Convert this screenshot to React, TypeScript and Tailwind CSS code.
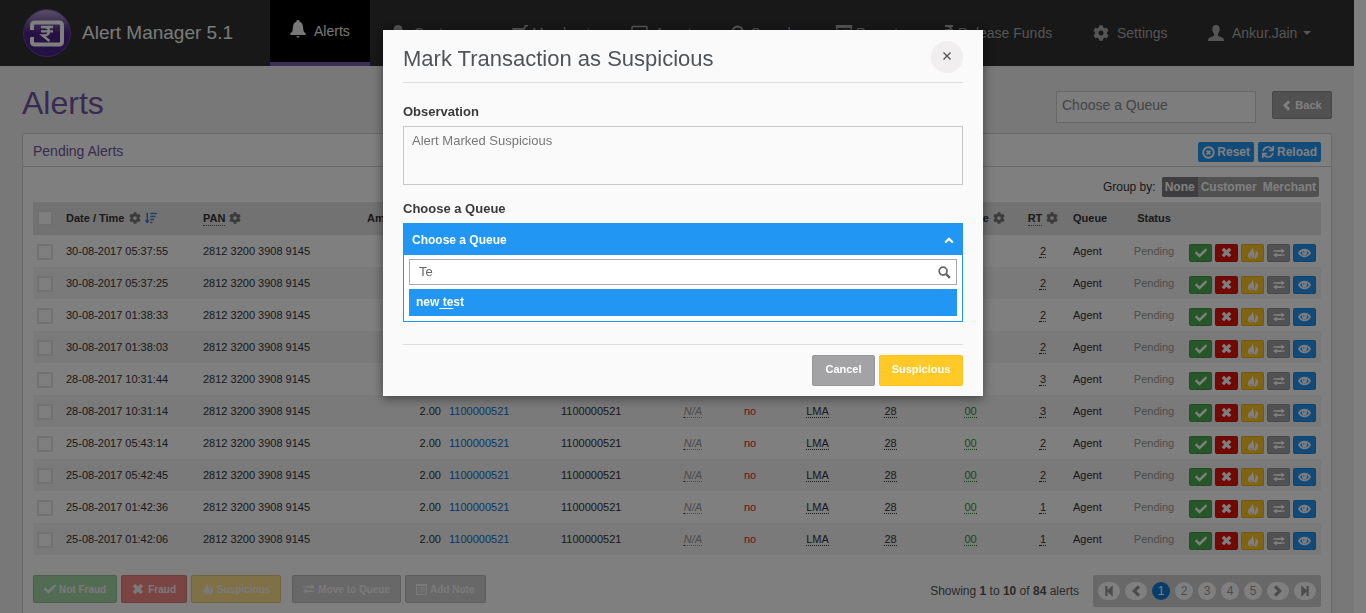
import { useState } from "react";
import type { ReactNode } from "react";
import { FaCheck, FaCog, FaSync, FaSortAmountDown } from "react-icons/fa";

type IconProps = { className?: string };

const Cross = ({ className }: IconProps) => (
  <svg viewBox="0 0 12 12" className={className} aria-hidden="true">
    <path d="M2 2 10 10M10 2 2 10" stroke="currentColor" strokeWidth="3.6" fill="none" />
  </svg>
);

const Bell = ({ className }: IconProps) => (
  <svg viewBox="0 0 16 18" className={className} fill="currentColor" aria-hidden="true">
    <path d="M8 0c1 0 1.600.7 1.700 1.700C11.800 2.500 12.800 4.200 13 6.500l.4 3.500c.2 1.700 1 2.600 2.300 3.600V15H.3v-1.400C1.600 12.600 2.400 11.700 2.600 10L3 6.500c.2-2.300 1.200-4 3.300-4.800C6.400.7 7 0 8 0z" />
    <path d="M6.300 16.200h3.400q-.4 1.600-1.700 1.600t-1.700-1.600z" />
  </svg>
);

const Cart = ({ className }: IconProps) => (
  <svg viewBox="0 0 16 16" className={className} fill="currentColor" aria-hidden="true">
    <path d="M0 3h11.500L12.500.5Q12.700 0 13.200 0H16v1.600h-2L11.200 10H2.200z" />
    <path d="M2.500 11.300h9v1.400h-9z" />
    <circle cx="4" cy="14.500" r="1.400" />
    <circle cx="10" cy="14.500" r="1.400" />
  </svg>
);

const Flame = ({ className }: IconProps) => (
  <svg viewBox="1 0 13 14" className={className} fill="currentColor" aria-hidden="true">
    <path d="M5.800 0C7 2 6 3.600 4.400 5.200 2.600 7 1.200 8.200 1.700 10.400c.4 1.800 1.700 3 3.500 3.500C4 12 4.200 10.800 5.400 9.400c.3 1.300.7 2.200.2 4.400C8 13 9.200 11 9 8.300 8.800 5 8 2 5.800 0z" />
    <path d="M10.300 3.500c.6 1.900.3 3.600-.2 5.200-.5 1.700-1.200 3-2 4.900 3-.3 5.200-1.900 5.500-4.400C13.800 6.800 12.400 5.200 10.300 3.500z" />
  </svg>
);

const Transfer = ({ className }: IconProps) => (
  <svg viewBox="0 0 14 12" className={className} fill="currentColor" aria-hidden="true">
    <path d="M.5 2.500H2v2H.5zM2.700 2.500H10V.3l4 3.200-4 3.200V4.500H2.700zM13.500 7.500H12v2h1.500zM11.300 7.500H4V5.300L0 8.500l4 3.200V9.500h7.300z" />
  </svg>
);

const Eye = ({ className }: IconProps) => (
  <svg viewBox="0 0 14 10" className={className} aria-hidden="true">
    <path d="M1 5C4 .2 10 .2 13 5 10 9.800 4 9.800 1 5z" fill="none" stroke="currentColor" strokeWidth="1.700" />
    <circle cx="7" cy="4.600" r="2.700" fill="currentColor" />
    <circle cx="6.300" cy="3.800" r=".8" fill="#2196f3" />
  </svg>
);

const ListBox = ({ className }: IconProps) => (
  <svg viewBox="0 0 16 16" className={className} aria-hidden="true">
    <path d="M0 0h16v16H0z M1.500 3v11.500h13V3z" fill="currentColor" fillRule="evenodd" />
    <path d="M3 5.500h1.500M6 5.500h7M3 8.500h1.500M6 8.500h7M3 11.500h1.500M6 11.500h7" stroke="currentColor" strokeWidth="1.400" />
  </svg>
);

const CircleCross = ({ className }: IconProps) => (
  <svg viewBox="0 0 14 14" className={className} fill="none" stroke="currentColor" aria-hidden="true">
    <circle cx="7" cy="7" r="5.700" strokeWidth="2" />
    <path d="M5 5l4 4M9 5L5 9" strokeWidth="2.200" />
  </svg>
);

const Chevron = ({ className }: IconProps) => (
  <svg viewBox="0 0 12 14" className={className} aria-hidden="true">
    <path d="M9.500 1.500 4 7l5.500 5.500" fill="none" stroke="currentColor" strokeWidth="3.800" />
  </svg>
);

const Skip = ({ className }: IconProps) => (
  <svg viewBox="0 0 12 14" className={className} fill="currentColor" aria-hidden="true">
    <path d="M1.500 1h2.700v5L10.500 0v14L4.200 8v5H1.500z" />
  </svg>
);

const Person = ({ className }: IconProps) => (
  <svg viewBox="0 0 16 16" className={className} fill="currentColor" aria-hidden="true">
    <path d="M8 0c2.300 0 3.700 1.600 3.700 4 0 2-.7 3.700-1.700 4.800v1.600c.6.700 2 1.200 3.500 1.800 1.800.7 2.500 1.400 2.500 3.800H0c0-2.400.7-3.100 2.500-3.800C4 11.600 5.400 11.100 6 10.400V8.800C5 7.700 4.300 6 4.300 4 4.300 1.600 5.700 0 8 0z" />
  </svg>
);

const Pin = ({ className }: IconProps) => (
  <svg viewBox="0 0 16 16" className={className} fill="currentColor" aria-hidden="true">
    <circle cx="8" cy="4.500" r="4.500" />
    <path d="M3 16V11q0-2 2-2h6q2 0 2 2v5z" />
  </svg>
);

const Monitor = ({ className }: IconProps) => (
  <svg viewBox="0 0 17 16" className={className} aria-hidden="true">
    <rect x="1" y="1" width="15" height="10" rx="1" fill="none" stroke="currentColor" strokeWidth="1.600" />
    <path d="M5 14.500h7" stroke="currentColor" strokeWidth="2" />
  </svg>
);

const Magnifier = ({ className }: IconProps) => (
  <svg viewBox="0 0 14 14" className={className} fill="none" stroke="currentColor" aria-hidden="true">
    <circle cx="5.500" cy="5.500" r="4.200" strokeWidth="1.900" />
    <path d="M8.500 8.500l4.300 4.300" strokeWidth="2.600" />
  </svg>
);

const Rupee = ({ className }: IconProps) => (
  <svg viewBox="0 0 10 16" className={className} fill="none" stroke="currentColor" strokeWidth="2" aria-hidden="true">
    <path d="M1 1h8M1 5h8M1 1h2q4 0 4 4t-4 4H1l6 6" />
  </svg>
);

const Logo = ({ className }: IconProps) => (
  <svg viewBox="0 0 48 48" className={className} aria-hidden="true">
    <defs>
      <linearGradient id="gloss" x1="0" y1="0" x2="0" y2="1">
        <stop offset="0" stopColor="#b3a0d2" />
        <stop offset=".4" stopColor="#5d3d96" />
        <stop offset=".5" stopColor="#4b2388" />
        <stop offset="1" stopColor="#4a2489" />
      </linearGradient>
    </defs>
    <circle cx="24" cy="24" r="23.500" fill="url(#gloss)" stroke="#6a48a4" />
    <path d="M9 21v-4.500q0-3 3-3h24q3 0 3 3v16q0 3-3 3H12q-3 0-3-3V28" fill="none" stroke="#fff" strokeWidth="4" />
    <path d="M7 21.500l5 2-3 1.500 3 1.500-5 2z" fill="#4b2388" />
    <path d="M18 18h12M18 22.300h12M18 18h3.500q4.500 0 4.500 4.200t-5 4.300h-1.500l7 5.500" fill="none" stroke="#fff" strokeWidth="2.300" />
  </svg>
);

const navItems: { label: string; width: string; icon: ReactNode; box: string; active?: boolean; caret?: boolean }[] = [
  { label: "Alerts", width: "w-[100px]", box: "w-6", icon: <Bell className="mb-1 h-[18px] w-4" />, active: true },
  { label: "Customers", width: "w-[122px]", box: "w-6", icon: <Pin className="size-4" /> },
  { label: "Merchants", width: "w-[119px]", box: "w-5", icon: <Cart className="size-4" /> },
  { label: "Agents", width: "w-[100px]", box: "w-6", icon: <Monitor className="size-[17px]" /> },
  { label: "Search", width: "w-[105px]", box: "w-5", icon: <Magnifier className="size-[17px]" /> },
  { label: "Reports", width: "w-[108px]", box: "w-5", icon: <ListBox className="size-4" /> },
  { label: "Release Funds", width: "w-[149px]", box: "w-[14px]", icon: <Rupee className="h-4 w-[10px]" /> },
  { label: "Settings", width: "w-[115px]", box: "w-6", icon: <FaCog className="size-4" /> },
  { label: "Ankur.Jain", width: "w-[146px]", box: "w-6", icon: <Person className="size-4" />, caret: true },
];

const rows = [
  ["30-08-2017 05:37:55", "2"],
  ["30-08-2017 05:37:25", "2"],
  ["30-08-2017 01:38:33", "2"],
  ["30-08-2017 01:38:03", "2"],
  ["28-08-2017 10:31:44", "3"],
  ["28-08-2017 10:31:14", "3"],
  ["25-08-2017 05:43:14", "2"],
  ["25-08-2017 05:42:45", "2"],
  ["25-08-2017 01:42:36", "1"],
  ["25-08-2017 01:42:06", "1"],
];

const Abbr = ({ children, className = "" }: { children: ReactNode; className?: string }) => (
  <abbr className={`inline-block border-b border-dotted border-[#333] leading-3 underline decoration-dotted underline-offset-2 ${className}`}>
    {children}
  </abbr>
);

const HeadAbbr = ({ children }: { children: ReactNode }) => (
  <abbr className="inline-block border-b border-dotted border-[#555] leading-[13px] no-underline">{children}</abbr>
);

const Gear = () => <FaCog className="ml-1 inline size-3 align-[-2px] text-[#777]" />;

const RowAction = ({ label, color, children }: { label: string; color: string; children: ReactNode }) => (
  <button type="button" aria-label={label} className={`flex h-[18px] w-[23px] items-center justify-center rounded-xs border border-black/10 text-white ${color}`}>
    {children}
  </button>
);

const BulkAction = ({ color, children }: { color: string; children: ReactNode }) => (
  <button type="button" disabled className={`flex h-7 items-center gap-[3px] rounded-xs border border-black/10 px-[10px] text-[10px] font-bold ${color}`}>
    {children}
  </button>
);

function AlertsTable() {
  return (
    <table className="w-full table-fixed border-collapse text-[11px] leading-4 text-[#333]">
      <colgroup>
        <col className="w-[29px]" />
        <col className="w-[137px]" />
        <col className="w-[151px]" />
        <col className="w-[95px]" />
        <col className="w-[112px]" />
        <col className="w-[107px]" />
        <col className="w-[58px]" />
        <col className="w-[56px]" />
        <col className="w-[79px]" />
        <col className="w-[67px]" />
        <col className="w-[93px]" />
        <col className="w-[52px]" />
        <col className="w-[54px]" />
        <col className="w-[62px]" />
        <col className="w-[136px]" />
      </colgroup>
      <thead>
        <tr className="h-[33px] bg-[#e4e4e4] text-left whitespace-nowrap [&>th]:pb-[2px]">
          <th className="px-1">
            <input type="checkbox" aria-label="Select all alerts" className="block size-4 appearance-none border-2 border-[#e0e0e0] bg-white" />
          </th>
          <th className="px-1">
            Date / Time
            <Gear />
            <FaSortAmountDown className="ml-1 inline size-3 align-[-2px] text-[#3f7fc4]" />
          </th>
          <th className="px-1"><HeadAbbr>PAN</HeadAbbr><Gear /></th>
          <th className="px-1 text-right">Amount (₹)<Gear /></th>
          <th className="px-1">Merchant ID</th>
          <th className="px-1">Terminal ID</th>
          <th className="px-1 text-center">MCC</th>
          <th className="px-1 text-center">Intl.</th>
          <th className="px-1 text-center">Source</th>
          <th className="px-1 text-center">Type</th>
          <th className="px-1 text-center">Response<Gear /></th>
          <th className="px-1 text-center"><HeadAbbr>RT</HeadAbbr><Gear /></th>
          <th className="px-1">Queue</th>
          <th className="px-1 text-center">Status</th>
          <th className="px-1" aria-label="Actions" />
        </tr>
      </thead>
      <tbody>
        {rows.map(([date, rt]) => (
          <tr key={date} className="h-8 even:bg-[#f4f4f4]">
            <td className="px-1 pt-[2px]">
              <input type="checkbox" aria-label={`Select alert ${date}`} className="block size-4 appearance-none border-2 border-[#e4e4e4] bg-white" />
            </td>
            <td className="px-1">{date}</td>
            <td className="px-1">2812 3200 3908 9145</td>
            <td className="px-1 text-right">2.00</td>
            <td className="px-1"><a href="#merchant" className="text-[#0b6fca]">1100000521</a></td>
            <td className="px-1">1100000521</td>
            <td className="px-1 text-center text-[#999] italic"><Abbr>N/A</Abbr></td>
            <td className="px-1 text-center text-[#e0252b]">no</td>
            <td className="px-1 text-center"><Abbr>LMA</Abbr></td>
            <td className="px-1 text-center"><Abbr>28</Abbr></td>
            <td className="px-1 text-center"><Abbr className="text-[#2f8f33]">00</Abbr></td>
            <td className="px-1 text-center"><Abbr>{rt}</Abbr></td>
            <td className="px-1">Agent</td>
            <td className="px-1 text-center text-[#999]">Pending</td>
            <td className="px-1 pt-[3px]">
              <div className="flex gap-[3px]">
                <RowAction label="Not fraud" color="bg-[#4caf50]"><FaCheck className="size-3" /></RowAction>
                <RowAction label="Fraud" color="bg-[#e51409]"><Cross className="size-[11px]" /></RowAction>
                <RowAction label="Suspicious" color="bg-[#ffc928]"><Flame className="size-3" /></RowAction>
                <RowAction label="Move to queue" color="bg-[#a3a3a5]"><Transfer className="h-[10px] w-3" /></RowAction>
                <RowAction label="View" color="bg-[#2196f3]"><Eye className="h-[10px] w-[13px]" /></RowAction>
              </div>
            </td>
          </tr>
        ))}
      </tbody>
    </table>
  );
}

function SuspiciousDialog() {
  const [note, setNote] = useState("Alert Marked Suspicious");
  const [query, setQuery] = useState("Te");
  return (
    <div role="dialog" aria-modal="true" aria-labelledby="dialog-title" className="w-[600px] bg-[#fafafa] px-5 pt-[11px] pb-[10px] shadow-[0_2px_10px_rgba(0,0,0,0.5)]">
      <header className="flex h-[42px] items-start justify-between border-b border-[#dedede]">
        <h2 id="dialog-title" className="pt-[2px] text-[22px] leading-8 text-[#4f5459]">Mark Transaction as Suspicious</h2>
        <button type="button" aria-label="Close" className="flex size-8 items-center justify-center rounded-full bg-[#f0eeef] pb-[2px] text-[#555]">
          <svg viewBox="0 0 8 8" className="size-2" fill="none" stroke="currentColor" strokeWidth="1.400" aria-hidden="true">
            <path d="M.5.5l7 7M7.500.5l-7 7" />
          </svg>
        </button>
      </header>
      <label htmlFor="observation" className="mt-5 block text-[13px] leading-[18px] font-bold text-[#3a3a3a]">Observation</label>
      <textarea
        id="observation"
        value={note}
        onChange={(e) => setNote(e.target.value)}
        className="mt-[5px] block h-[59px] w-full resize-none border border-[#c8c8c8] bg-[#fafafa] px-2 py-1 text-[13px] leading-5 text-[#777] outline-none"
      />
      <label htmlFor="queue-search" className="mt-[15px] block text-[13px] leading-[18px] font-bold text-[#3a3a3a]">Choose a Queue</label>
      <div className="mt-[5px] border border-[#2196f3] bg-white">
        <button type="button" aria-expanded="true" className="flex h-[31px] w-full items-center justify-between bg-[#2196f3] px-2 text-[12px] font-bold text-white">
          Choose a Queue
          <svg viewBox="0 0 10 8" className="h-2 w-[10px]" fill="none" stroke="currentColor" strokeWidth="2.200" aria-hidden="true">
            <path d="M1.200 6.500 5 2.700l3.800 3.800" />
          </svg>
        </button>
        <div className="p-[5px] pt-1">
          <div className="flex h-[26px] items-center border border-[#aaa] bg-white px-[5px] pl-[9px]">
            <input id="queue-search" type="text" value={query} onChange={(e) => setQuery(e.target.value)} className="min-w-0 flex-1 bg-transparent text-[13px] text-[#666] outline-none" />
            <Magnifier className="size-[13px] text-[#666]" />
          </div>
          <ul role="listbox" aria-label="Queues" className="mt-1">
            <li role="option" aria-selected="true" className="h-[27px] bg-[#2196f3] px-[7px] text-[12px] leading-[27px] font-bold text-white">
              new<span className="underline underline-offset-2"> te</span>st
            </li>
          </ul>
        </div>
      </div>
      <footer className="mt-[22px] flex justify-end gap-1 border-t border-[#dedede] pt-[10px] text-[11px] font-bold text-white">
        <button type="button" className="h-[31px] w-[63px] rounded-xs border border-[#97979a] bg-[#a3a3a5] pb-[2px]">Cancel</button>
        <button type="button" className="h-[31px] w-[84px] rounded-xs border border-[#ffc41a] bg-[#ffc928] pb-[2px]">Suspicious</button>
      </footer>
    </div>
  );
}

export default function App() {
  return (
    <div className="h-screen overflow-hidden bg-white pr-3 font-['Liberation_Sans',Arial,sans-serif]">
      <div className="min-h-full bg-[#f1f1f1]">
        <header className="flex h-[66px] justify-between bg-[#303030] text-[#aaa]">
          <div className="flex items-center gap-[11px] pl-[23px] text-[19px] text-[#f4f4f4]">
            <Logo className="size-12" />
            Alert Manager 5.1
          </div>
          <nav className="flex justify-end pr-5 text-[14px]">
            {navItems.map((item) => (
              <a
                key={item.label}
                href="#nav"
                className={`flex items-center pl-5 whitespace-nowrap ${item.width} ${item.active ? "border-b-4 border-[#7a5aae] bg-black text-[#f0f0f0]" : ""}`}
              >
                <span className={`shrink-0 ${item.box}`}>{item.icon}</span>
                {item.label}
                {item.caret && <span className="ml-[6px] border-x-4 border-t-4 border-x-transparent border-t-[#aaa]" />}
              </a>
            ))}
          </nav>
        </header>

        <main className="px-[22px] pt-[15px]">
          <div className="flex items-start justify-between">
            <h1 className="mt-1 text-[32px] leading-[36px] text-[#7155a2]">Alerts</h1>
            <div className="mt-[10px] flex items-start gap-4">
              <input type="text" aria-label="Choose a Queue" placeholder="Choose a Queue" className="h-8 w-[200px] border border-[#d0d0d0] bg-[#fafafa] px-[5px] pb-1 text-[14px] placeholder:text-[#8a8a8a]" />
              <button type="button" className="flex h-7 w-[60px] items-center justify-center gap-1 rounded-xs border border-[#8e8e90] bg-[#a3a3a5] text-[11px] font-bold text-white">
                <Chevron className="h-[11px] w-[9px]" />
                Back
              </button>
            </div>
          </div>

          <section className="mt-[10px] rounded-t-xs border border-[#d5d5d5] bg-white">
            <header className="flex h-[33px] items-center justify-between border-b border-[#d0d0d0] px-[10px] pt-[2px] text-[14px] text-[#7155a2]">
              Pending Alerts
              <div className="flex gap-1 pt-[2px] text-[12px] font-bold text-white">
                <button type="button" className="flex h-5 items-center gap-[2px] rounded-xs bg-[#2196f3] px-1">
                  <CircleCross className="size-[13px]" />
                  Reset
                </button>
                <button type="button" className="flex h-5 items-center gap-[3px] rounded-xs bg-[#2196f3] px-1">
                  <FaSync className="size-3" />
                  Reload
                </button>
              </div>
            </header>

            <div className="px-[10px] pt-[10px] pb-4">
              <div className="flex items-center justify-end gap-[6px] pr-[2px] text-[12px] text-[#333]">
                Group by:
                <div className="flex h-5 overflow-hidden rounded-xs bg-[#a3a3a5] font-bold text-white">
                  <button type="button" className="bg-[#7d7d80] px-[3px]">None</button>
                  <button type="button" className="px-[3px]">Customer</button>
                  <button type="button" className="px-[3px]">Merchant</button>
                </div>
              </div>

              <div className="mt-[5px]">
                <AlertsTable />
              </div>

              <div className="mt-5 flex items-start justify-between">
                <div className="flex gap-1 text-[#f4f4f4]">
                  <BulkAction color="bg-[#a5d7a7]"><FaCheck className="size-3" />Not Fraud</BulkAction>
                  <BulkAction color="bg-[#f28984]"><Cross className="mr-px size-3" />Fraud</BulkAction>
                  <BulkAction color="bg-[#ffe08a]"><Flame className="size-3" />Suspicious</BulkAction>
                  <div className="ml-[7px] flex gap-1">
                    <BulkAction color="bg-[#d1d1d2]"><Transfer className="h-[10px] w-3" />Move to Queue</BulkAction>
                    <BulkAction color="bg-[#d1d1d2]"><ListBox className="size-[11px]" />Add Note</BulkAction>
                  </div>
                </div>
                <div className="flex items-center gap-[14px] text-[12px] text-[#555]">
                  <p>Showing <b>1</b> to <b>10</b> of <b>84</b> alerts</p>
                  <nav aria-label="Pages" className="flex h-8 items-center gap-[5px] rounded-xs bg-[#d1d1d2] px-[5px] text-[#999]">
                    <button type="button" aria-label="First page" className="flex h-[18px] w-[22px] items-center justify-center rounded-full bg-white"><Skip className="h-3 w-[10px]" /></button>
                    <button type="button" aria-label="Previous page" className="flex h-[18px] w-[22px] items-center justify-center rounded-full bg-white"><Chevron className="h-3 w-[10px]" /></button>
                    {[1, 2, 3, 4, 5].map((n) => (
                      <button key={n} type="button" className={`size-[18px] rounded-full ${n === 1 ? "bg-[#0d7bd4] text-white" : "bg-white"}`}>{n}</button>
                    ))}
                    <button type="button" aria-label="Next page" className="flex h-[18px] w-[22px] items-center justify-center rounded-full bg-white"><Chevron className="h-3 w-[10px] rotate-180" /></button>
                    <button type="button" aria-label="Last page" className="flex h-[18px] w-[22px] items-center justify-center rounded-full bg-white"><Skip className="h-3 w-[10px] rotate-180" /></button>
                  </nav>
                </div>
              </div>
            </div>
          </section>
        </main>
      </div>

      <div className="fixed inset-0 flex items-start justify-center bg-black/50 pt-[30px]">
        <SuspiciousDialog />
      </div>
    </div>
  );
}
